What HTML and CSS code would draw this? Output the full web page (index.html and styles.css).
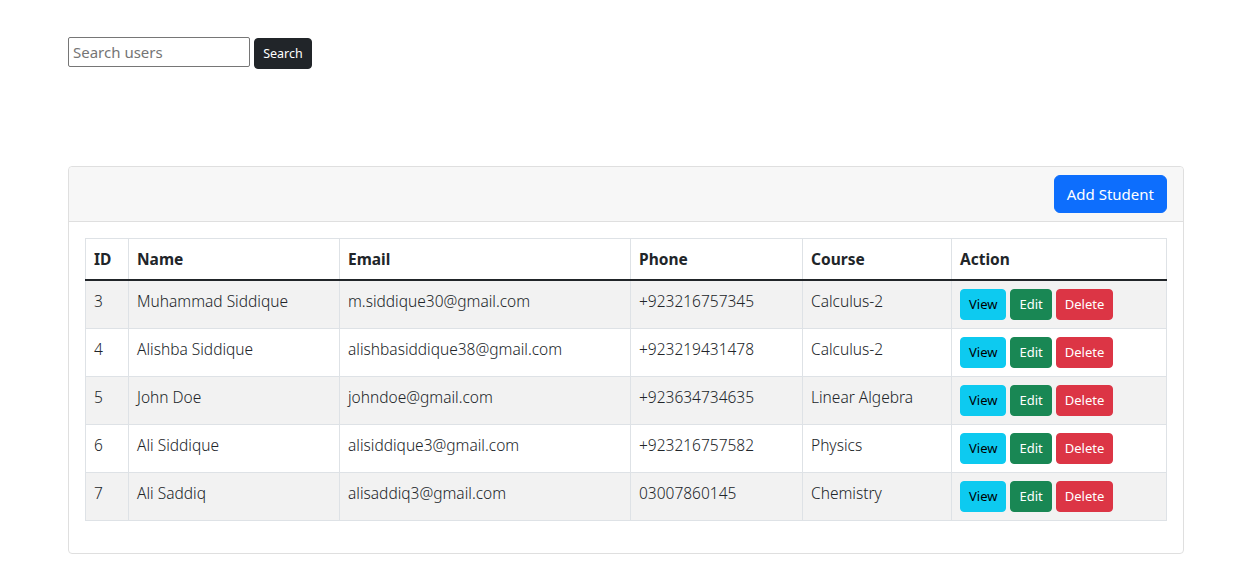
FILE: index.html
```html
<!DOCTYPE html>
<html lang="en">
<head>
    <meta charset="UTF-8">
    <meta name="viewport" content="width=device-width, initial-scale=1.0">
    <title>Students</title>
    <link rel="stylesheet" href="styles.css">
</head>
<body>
    <div class="container">
        <form class="search-form">
            <input type="text" class="search-input" placeholder="Search users">
            <button type="button" class="btn btn-sm btn-dark">Search</button>
        </form>

        <div class="card">
            <div class="card-header">
                <button type="button" class="btn btn-primary">Add Student</button>
            </div>
            <div class="card-body">
                <table class="table">
                    <colgroup>
                        <col class="col-id">
                        <col class="col-name">
                        <col class="col-email">
                        <col class="col-phone">
                        <col class="col-course">
                        <col class="col-action">
                    </colgroup>
                    <thead>
                        <tr>
                            <th>ID</th>
                            <th>Name</th>
                            <th>Email</th>
                            <th>Phone</th>
                            <th>Course</th>
                            <th>Action</th>
                        </tr>
                    </thead>
                    <tbody>
                        <tr>
                            <td>3</td>
                            <td>Muhammad Siddique</td>
                            <td>m.siddique30@gmail.com</td>
                            <td>+923216757345</td>
                            <td>Calculus-2</td>
                            <td>
                                <button class="btn btn-sm btn-info">View</button>
                                <button class="btn btn-sm btn-success">Edit</button>
                                <button class="btn btn-sm btn-danger">Delete</button>
                            </td>
                        </tr>
                        <tr>
                            <td>4</td>
                            <td>Alishba Siddique</td>
                            <td>alishbasiddique38@gmail.com</td>
                            <td>+923219431478</td>
                            <td>Calculus-2</td>
                            <td>
                                <button class="btn btn-sm btn-info">View</button>
                                <button class="btn btn-sm btn-success">Edit</button>
                                <button class="btn btn-sm btn-danger">Delete</button>
                            </td>
                        </tr>
                        <tr>
                            <td>5</td>
                            <td>John Doe</td>
                            <td>johndoe@gmail.com</td>
                            <td>+923634734635</td>
                            <td>Linear Algebra</td>
                            <td>
                                <button class="btn btn-sm btn-info">View</button>
                                <button class="btn btn-sm btn-success">Edit</button>
                                <button class="btn btn-sm btn-danger">Delete</button>
                            </td>
                        </tr>
                        <tr>
                            <td>6</td>
                            <td>Ali Siddique</td>
                            <td>alisiddique3@gmail.com</td>
                            <td>+923216757582</td>
                            <td>Physics</td>
                            <td>
                                <button class="btn btn-sm btn-info">View</button>
                                <button class="btn btn-sm btn-success">Edit</button>
                                <button class="btn btn-sm btn-danger">Delete</button>
                            </td>
                        </tr>
                        <tr>
                            <td>7</td>
                            <td>Ali Saddiq</td>
                            <td>alisaddiq3@gmail.com</td>
                            <td>03007860145</td>
                            <td>Chemistry</td>
                            <td>
                                <button class="btn btn-sm btn-info">View</button>
                                <button class="btn btn-sm btn-success">Edit</button>
                                <button class="btn btn-sm btn-danger">Delete</button>
                            </td>
                        </tr>
                    </tbody>
                </table>
            </div>
        </div>
    </div>
</body>
</html>
```

FILE: styles.css
```css
body {
    margin: 0;
    font-family: "Noto Sans", "Open Sans", sans-serif;
    font-size: 16px;
    line-height: 1.5;
    color: #212529;
    background: #fff;
}

.container {
    width: 1116px;
    margin-left: 68px;
}

.search-form {
    padding-top: 36px;
    height: 34px;
    margin: 0;
}

.search-input {
    width: 182px;
    height: 30px;
    box-sizing: border-box;
    padding: 1px 4px;
    font-family: inherit;
    font-size: 15px;
    color: #212529;
    border: 1px solid #767676;
    border-radius: 2px;
    vertical-align: middle;
}

.search-input::placeholder {
    color: #757575;
}

.search-form .btn {
    vertical-align: middle;
    position: relative;
    top: 2px;
    font-size: 12.5px;
}

.btn {
    display: inline-block;
    font-family: inherit;
    font-size: 16px;
    line-height: 1.5;
    padding: 6px 12px;
    border: 1px solid transparent;
    border-radius: 6px;
    color: #fff;
    cursor: pointer;
    vertical-align: middle;
}

.btn-sm {
    font-size: 13px;
    line-height: 21px;
    padding: 4px 8px;
    border-radius: 4px;
}

.btn-dark {
    background: #212529;
    border-color: #212529;
}

.btn-primary {
    background: #0d6efd;
    border-color: #0d6efd;
    font-size: 15px;
    padding: 6px 12px;
    line-height: 24px;
}

.btn-info {
    background: #0dcaf0;
    border-color: #0dcaf0;
    color: #000;
}

.btn-success {
    background: #198754;
    border-color: #198754;
}

.btn-danger {
    background: #dc3545;
    border-color: #dc3545;
}

.card {
    margin-top: 96px;
    border: 1px solid #dfdfdf;
    border-radius: 4px;
}

.card-header {
    display: flex;
    justify-content: flex-end;
    padding: 8px 16px;
    background: #f7f7f7;
    border-bottom: 1px solid #dfdfdf;
    border-radius: 4px 4px 0 0;
}

.card-body {
    padding: 16px;
}

.table {
    width: 100%;
    border-collapse: collapse;
    table-layout: fixed;
    margin-bottom: 16px;
    border: 1px solid #dee2e6;
}

.col-id { width: 43px; }
.col-name { width: 211px; }
.col-email { width: 291px; }
.col-phone { width: 172px; }
.col-course { width: 149px; }

.table th,
.table td {
    padding: 8px;
    text-align: left;
    vertical-align: top;
    border: 1px solid #dee2e6;
    white-space: nowrap;
    font-size: 15.5px;
    line-height: 24px;
}

.table td {
    font-weight: 300;
}

.table th {
    font-weight: 700;
    border-bottom: 2px solid #212529;
}

.table tbody tr:nth-child(odd) td {
    background: #f2f2f2;
}
```
